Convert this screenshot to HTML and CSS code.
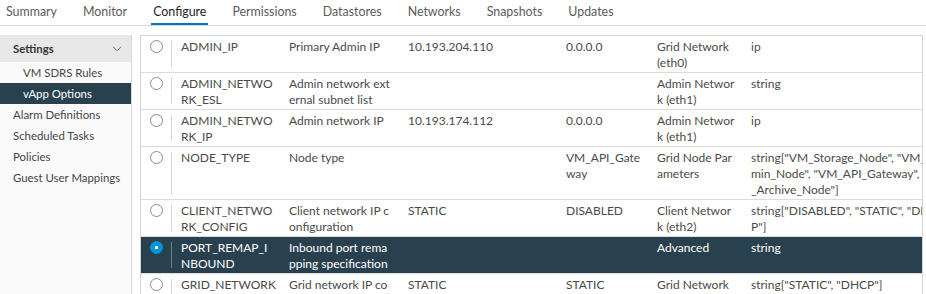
FILE: index.html
```html
<!DOCTYPE html>
<html lang="en">
<head>
    <meta charset="UTF-8">
    <title>vApp Options</title>
    <link rel="stylesheet" href="styles.css">
</head>
<body>
    <!-- Object tabs -->
    <nav class="tabs">
        <a class="tab">Summary</a>
        <a class="tab">Monitor</a>
        <a class="tab active">Configure</a>
        <a class="tab">Permissions</a>
        <a class="tab">Datastores</a>
        <a class="tab">Networks</a>
        <a class="tab">Snapshots</a>
        <a class="tab">Updates</a>
    </nav>

    <div class="content">
        <!-- Settings navigation -->
        <aside class="sidebar">
            <div class="side-head">
                <span>Settings</span>
                <svg class="chevron" width="10" height="6" viewBox="0 0 10 6"><path d="M1 0.8 L5 4.8 L9 0.8" fill="none" stroke="#666" stroke-width="1"/></svg>
            </div>
            <ul class="side-list">
                <li class="sub">VM SDRS Rules</li>
                <li class="sub active">vApp Options</li>
                <li>Alarm Definitions</li>
                <li>Scheduled Tasks</li>
                <li>Policies</li>
                <li>Guest User Mappings</li>
            </ul>
        </aside>

        <!-- Properties grid -->
        <div class="grid-wrap">
            <table class="grid">
                <colgroup>
                    <col class="c-radio">
                    <col class="c-key">
                    <col class="c-label">
                    <col class="c-value">
                    <col class="c-default">
                    <col class="c-category">
                    <col>
                </colgroup>
                <tr>
                    <td class="sel"><span class="radio"></span></td>
                    <td class="key">ADMIN_IP</td>
                    <td>Primary Admin IP</td>
                    <td>10.193.204.110</td>
                    <td>0.0.0.0</td>
                    <td>Grid Network<br>(eth0)</td>
                    <td>ip</td>
                </tr>
                <tr>
                    <td class="sel"><span class="radio"></span></td>
                    <td class="key">ADMIN_NETWO<br>RK_ESL</td>
                    <td>Admin network ext<br>ernal subnet list</td>
                    <td></td>
                    <td></td>
                    <td>Admin Networ<br>k (eth1)</td>
                    <td>string</td>
                </tr>
                <tr>
                    <td class="sel"><span class="radio"></span></td>
                    <td class="key">ADMIN_NETWO<br>RK_IP</td>
                    <td>Admin network IP</td>
                    <td>10.193.174.112</td>
                    <td>0.0.0.0</td>
                    <td>Admin Networ<br>k (eth1)</td>
                    <td>ip</td>
                </tr>
                <tr>
                    <td class="sel"><span class="radio"></span></td>
                    <td class="key">NODE_TYPE</td>
                    <td>Node type</td>
                    <td></td>
                    <td>VM_API_Gate<br>way</td>
                    <td>Grid Node Par<br>ameters</td>
                    <td>string["VM_Storage_Node", "VM_Ad<br>min_Node", "VM_API_Gateway", "VM<br>_Archive_Node"]</td>
                </tr>
                <tr>
                    <td class="sel"><span class="radio"></span></td>
                    <td class="key">CLIENT_NETWO<br>RK_CONFIG</td>
                    <td>Client network IP c<br>onfiguration</td>
                    <td>STATIC</td>
                    <td>DISABLED</td>
                    <td>Client Networ<br>k (eth2)</td>
                    <td>string["DISABLED", "STATIC", "DH<br>P"]</td>
                </tr>
                <tr class="selected">
                    <td class="sel"><span class="radio checked"></span></td>
                    <td class="key">PORT_REMAP_I<br>NBOUND</td>
                    <td>Inbound port rema<br>pping specification</td>
                    <td></td>
                    <td></td>
                    <td>Advanced</td>
                    <td>string</td>
                </tr>
                <tr>
                    <td class="sel"><span class="radio"></span></td>
                    <td class="key">GRID_NETWORK</td>
                    <td>Grid network IP co<br>nfiguration</td>
                    <td>STATIC</td>
                    <td>STATIC</td>
                    <td>Grid Network<br>(eth0)</td>
                    <td>string["STATIC", "DHCP"]</td>
                </tr>
            </table>
        </div>
    </div>
</body>
</html>
```

FILE: styles.css
```css
body {
    margin: 0;
    width: 926px;
    height: 294px;
    overflow: hidden;
    font-family: Lato, 'Noto Sans', sans-serif;
    background-color: #fff;
    color: #4a4a4a;
}

.tabs {
    display: flex;
    height: 25px;
    padding-left: 4px;
    border-bottom: 1px solid #d7d7d7;
}

.tab {
    padding: 0 2px;
    margin-right: 22px;
    font-size: 12.4px;
    line-height: 24px;
    color: #5c5c5c;
    border-bottom: 2px solid transparent;
}

.tab.active {
    color: #222;
    border-bottom-color: #0079b8;
}

.content {
    display: flex;
    height: 259px;
    padding-top: 9px;
    overflow: hidden;
}

.sidebar {
    width: 131px;
    background-color: #fafafa;
    border-right: 1px solid #d7d7d7;
    font-size: 11.4px;
    color: #454545;
}

.side-head {
    display: flex;
    justify-content: space-between;
    align-items: center;
    height: 27px;
    padding: 0 9px 0 13px;
    background-color: #e8e8e8;
    font-weight: bold;
    color: #333;
}

.side-list {
    list-style: none;
    margin: 0;
    padding: 0;
}

.side-list li {
    height: 21px;
    line-height: 21px;
    padding-left: 13px;
}

.side-list li.sub {
    padding-left: 23px;
}

.side-list li.active {
    background-color: #29414e;
    color: #fff;
}

.grid-wrap {
    width: 781px;
    margin-left: 8px;
    border: 1px solid #d4d4d4;
    border-bottom: none;
    overflow: hidden;
}

.grid {
    width: 781px;
    table-layout: fixed;
    border-collapse: collapse;
    font-size: 12px;
    line-height: 16px;
}

.c-radio { width: 31px; }
.c-key { width: 117px; }
.c-label { width: 119px; }
.c-value { width: 158px; }
.c-default { width: 91px; }
.c-category { width: 94px; }

.grid tr {
    border-bottom: 1px solid #dcdcdc;
}

.grid td {
    vertical-align: top;
    padding: 3px 0 1px 0;
    white-space: nowrap;
    overflow: hidden;
}

.grid td.sel {
    padding: 4px 0 0 9px;
    background: linear-gradient(#d4d4d4, #d4d4d4) no-repeat right 0 top 5px / 1px calc(100% - 10px);
}

.grid td.key {
    padding-left: 9px;
}

.grid tr.selected {
    background-color: #29414e;
    color: #fff;
}

.grid tr.selected td.sel {
    background-image: linear-gradient(#6b7f8a, #6b7f8a);
}

.radio {
    display: block;
    width: 11px;
    height: 11px;
    border: 1px solid #8c8c8c;
    border-radius: 50%;
    background-color: #fff;
}

.radio.checked {
    border-color: #0095d3;
    background: radial-gradient(circle, #fff 0 1.5px, #0095d3 2px);
}
```
